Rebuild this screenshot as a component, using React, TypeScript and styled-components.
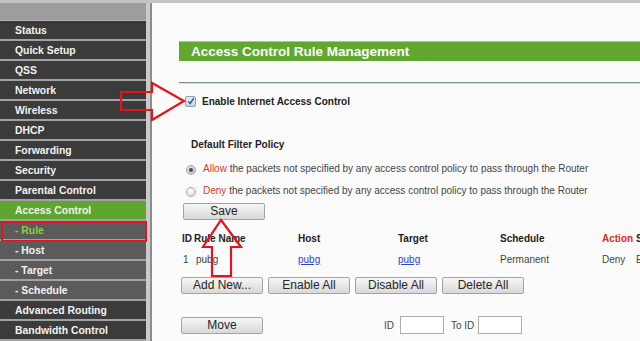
import React from "react";
import styled, { createGlobalStyle, css } from "styled-components";

const Global = createGlobalStyle`
  html, body { margin: 0; padding: 0; }
  body {
    width: 640px;
    height: 341px;
    overflow: hidden;
    background: #fcfbfc;
    font-family: "Liberation Sans", Arial, sans-serif;
  }
`;

const Page = styled.div`
  position: relative;
  width: 640px;
  height: 341px;
  overflow: hidden;
  display: flex;
  flex-direction: column;
`;

const TopStrip = styled.div`
  height: 3px;
  background: #c4c4c4;
  flex: none;
`;

const Main = styled.div`
  flex: 1;
  display: flex;
  min-height: 0;
`;

const Sidebar = styled.nav`
  width: 146px;
  flex: none;
  display: flex;
  flex-direction: column;
  border-right: 4px solid #cacaca;
  background: #3c3c3c;
`;

const SideHeader = styled.div`
  height: 17px;
  background: #9d9d9d;
  border-bottom: 1px solid #b4b4b4;
`;

type ItemKind = "main" | "active" | "sub" | "selected";

const SideItem = styled.div<{ $kind: ItemKind }>`
  position: relative;
  height: 18px;
  border-bottom: 2px solid #a2a2a2;
  display: flex;
  align-items: center;
  padding-left: 15px;
  font-size: 10.4px;
  font-weight: bold;
  color: #f2f2f2;
  background: #3b3b3b;
  ${(p) =>
    p.$kind === "active" &&
    css`
      background: #5ea62f;
    `}
  ${(p) =>
    p.$kind === "sub" &&
    css`
      background: #5b5b5b;
    `}
  ${(p) =>
    p.$kind === "selected" &&
    css`
      background: #5b5b5b;
      color: #8fcb48;
      &::after {
        content: "";
        position: absolute;
        left: 1px;
        right: -1px;
        top: 0;
        bottom: -3px;
        border: 2px solid #e2141c;
      }
    `}
`;

const Content = styled.section`
  flex: 1;
  border-left: 2px solid #8c8c8c;
  background: #fcfbfc;
  overflow: hidden;
  display: flex;
  flex-direction: column;
  color: #333;
`;

const TitleBar = styled.div`
  margin: 38px 0 0 27px;
  height: 20px;
  width: 520px;
  background: #60a830;
  border-top: 1px solid #9fd07c;
  box-sizing: border-box;
  display: flex;
  align-items: center;
  padding-left: 12px;
  font-size: 13.5px;
  font-weight: bold;
  color: #fbfdf8;
`;

const Rule = styled.div`
  margin: 21px 0 0 27px;
  height: 1px;
  width: 520px;
  background: #7d8f8c;
  border-bottom: 1px solid #cfe8dc;
`;

const CheckRow = styled.label`
  margin: 11px 0 0 33px;
  height: 12px;
  display: flex;
  align-items: center;
  gap: 6px;
  font-size: 10px;
  font-weight: bold;
  color: #222;
  white-space: nowrap;
`;

const CheckBox = styled.span`
  width: 11px;
  height: 11px;
  box-sizing: border-box;
  border: 1px solid #8d9db0;
  border-radius: 2px;
  background: linear-gradient(#e6ebf2, #c9d2de);
  display: flex;
  align-items: center;
  justify-content: center;
`;

const SectionLabel = styled.div`
  margin: 31px 0 0 39px;
  height: 14px;
  line-height: 14px;
  font-size: 10px;
  font-weight: bold;
  color: #222;
`;

const RadioRow = styled.div<{ $top: number }>`
  margin: ${(p) => p.$top}px 0 0 34px;
  height: 14px;
  display: flex;
  align-items: center;
  gap: 7px;
  font-size: 10px;
  color: #444;
  white-space: nowrap;
`;

const Radio = styled.span<{ $on?: boolean }>`
  width: 10px;
  height: 10px;
  box-sizing: border-box;
  border-radius: 50%;
  border: 1px solid #a9a9a9;
  background: radial-gradient(circle at 40% 35%, #ffffff, #cfcfcf);
  transform: translateY(2px);
  position: relative;
  ${(p) =>
    p.$on &&
    css`
      background: radial-gradient(circle at 40% 35%, #e8e8e8, #b9bcc4);
      &::after {
        content: "";
        position: absolute;
        left: 2px;
        top: 2px;
        width: 4px;
        height: 4px;
        border-radius: 50%;
        background: #3d4a66;
      }
    `}
`;

const Red = styled.span`
  color: #d83a2c;
`;

const Button = styled.button<{ $w?: number }>`
  width: ${(p) => p.$w ?? 82}px;
  height: 17px;
  padding: 0;
  box-sizing: border-box;
  border: 1px solid #a3a3a3;
  border-radius: 2px;
  background: linear-gradient(#f7f7f7, #e6e6e6 50%, #d9d9d9);
  font-family: "Liberation Sans", Arial, sans-serif;
  font-size: 12px;
  line-height: 15px;
  color: #262626;
`;

const SaveRow = styled.div`
  margin: 6px 0 0 31px;
  display: flex;
`;

const Table = styled.div`
  margin: 11px 0 0 30px;
  display: grid;
  grid-template-columns: 12px 104px 100px 102px 102px 34px 60px;
  grid-auto-rows: 14px;
  row-gap: 7px;
  align-items: center;
  font-size: 10px;
  white-space: nowrap;
`;

const Th = styled.div<{ $red?: boolean }>`
  font-weight: bold;
  color: ${(p) => (p.$red ? "#e4291f" : "#222")};
`;

const Td = styled.div<{ $pad?: number }>`
  color: #444;
  padding-left: ${(p) => p.$pad ?? 0}px;
`;

const Link = styled.a`
  color: #2f43c8;
  text-decoration: underline;
`;

const ButtonRow = styled.div<{ $top: number }>`
  margin: ${(p) => p.$top}px 0 0 29px;
  display: flex;
  gap: 5px;
  align-items: center;
`;

const MoveRow = styled.div`
  margin: 22px 0 0 29px;
  display: flex;
  align-items: center;
  font-size: 10px;
  color: #444;
`;

const FieldLabel = styled.span<{ $ml: number; $mr: number }>`
  margin-left: ${(p) => p.$ml}px;
  margin-right: ${(p) => p.$mr}px;
`;

const Input = styled.input`
  width: 44px;
  height: 18px;
  box-sizing: border-box;
  border: 1px solid #adadad;
  background: #fff;
  padding: 0;
`;

const Overlay = styled.svg`
  position: absolute;
  left: 0;
  top: 0;
  pointer-events: none;
`;

const items: { label: string; kind: ItemKind }[] = [
  { label: "Status", kind: "main" },
  { label: "Quick Setup", kind: "main" },
  { label: "QSS", kind: "main" },
  { label: "Network", kind: "main" },
  { label: "Wireless", kind: "main" },
  { label: "DHCP", kind: "main" },
  { label: "Forwarding", kind: "main" },
  { label: "Security", kind: "main" },
  { label: "Parental Control", kind: "main" },
  { label: "Access Control", kind: "active" },
  { label: "- Rule", kind: "selected" },
  { label: "- Host", kind: "sub" },
  { label: "- Target", kind: "sub" },
  { label: "- Schedule", kind: "sub" },
  { label: "Advanced Routing", kind: "main" },
  { label: "Bandwidth Control", kind: "main" },
];

const policyText =
  " the packets not specified by any access control policy to pass through the Router";

export default function App() {
  return (
    <>
      <Global />
      <Page>
        <TopStrip />
        <Main>
          <Sidebar>
            <SideHeader />
            {items.map((it) => (
              <SideItem key={it.label} $kind={it.kind}>
                {it.label}
              </SideItem>
            ))}
          </Sidebar>
          <Content>
            <TitleBar>Access Control Rule Management</TitleBar>
            <Rule />
            <CheckRow>
              <CheckBox>
                <svg width="8" height="8" viewBox="0 0 8 8">
                  <path d="M1.2 4.4 L3.2 6.4 L6.8 1.2" fill="none" stroke="#2a4f9c" strokeWidth="1.4" />
                </svg>
              </CheckBox>
              Enable Internet Access Control
            </CheckRow>
            <SectionLabel>Default Filter Policy</SectionLabel>
            <RadioRow $top={9}>
              <Radio $on />
              <span>
                <Red>Allow</Red>
                {policyText}
              </span>
            </RadioRow>
            <RadioRow $top={8}>
              <Radio />
              <span>
                <Red>Deny</Red>
                {policyText}
              </span>
            </RadioRow>
            <SaveRow>
              <Button>Save</Button>
            </SaveRow>
            <Table>
              <Th>ID</Th>
              <Th>Rule Name</Th>
              <Th>Host</Th>
              <Th>Target</Th>
              <Th>Schedule</Th>
              <Th $red>Action</Th>
              <Th>Status</Th>
              <Td $pad={1}>1</Td>
              <Td $pad={2}>pubg</Td>
              <Td>
                <Link>pubg</Link>
              </Td>
              <Td>
                <Link>pubg</Link>
              </Td>
              <Td>Permanent</Td>
              <Td>Deny</Td>
              <Td>Enabled</Td>
            </Table>
            <ButtonRow $top={11}>
              <Button>Add New...</Button>
              <Button>Enable All</Button>
              <Button>Disable All</Button>
              <Button>Delete All</Button>
            </ButtonRow>
            <MoveRow>
              <Button>Move</Button>
              <FieldLabel $ml={121} $mr={6}>ID</FieldLabel>
              <Input />
              <FieldLabel $ml={7} $mr={4}>To ID</FieldLabel>
              <Input />
            </MoveRow>
          </Content>
        </Main>
        <Overlay width="640" height="341" viewBox="0 0 640 341">
          <polygon
            points="121,92 152,92 152,83 184,101 152,120 152,110 121,110"
            fill="none"
            stroke="#e5141b"
            strokeWidth="2.2"
          />
          <polygon
            points="221,220 241,247 231,247 231,276 212,276 212,247 203,247"
            fill="none"
            stroke="#e5141b"
            strokeWidth="2.2"
          />
        </Overlay>
      </Page>
    </>
  );
}
